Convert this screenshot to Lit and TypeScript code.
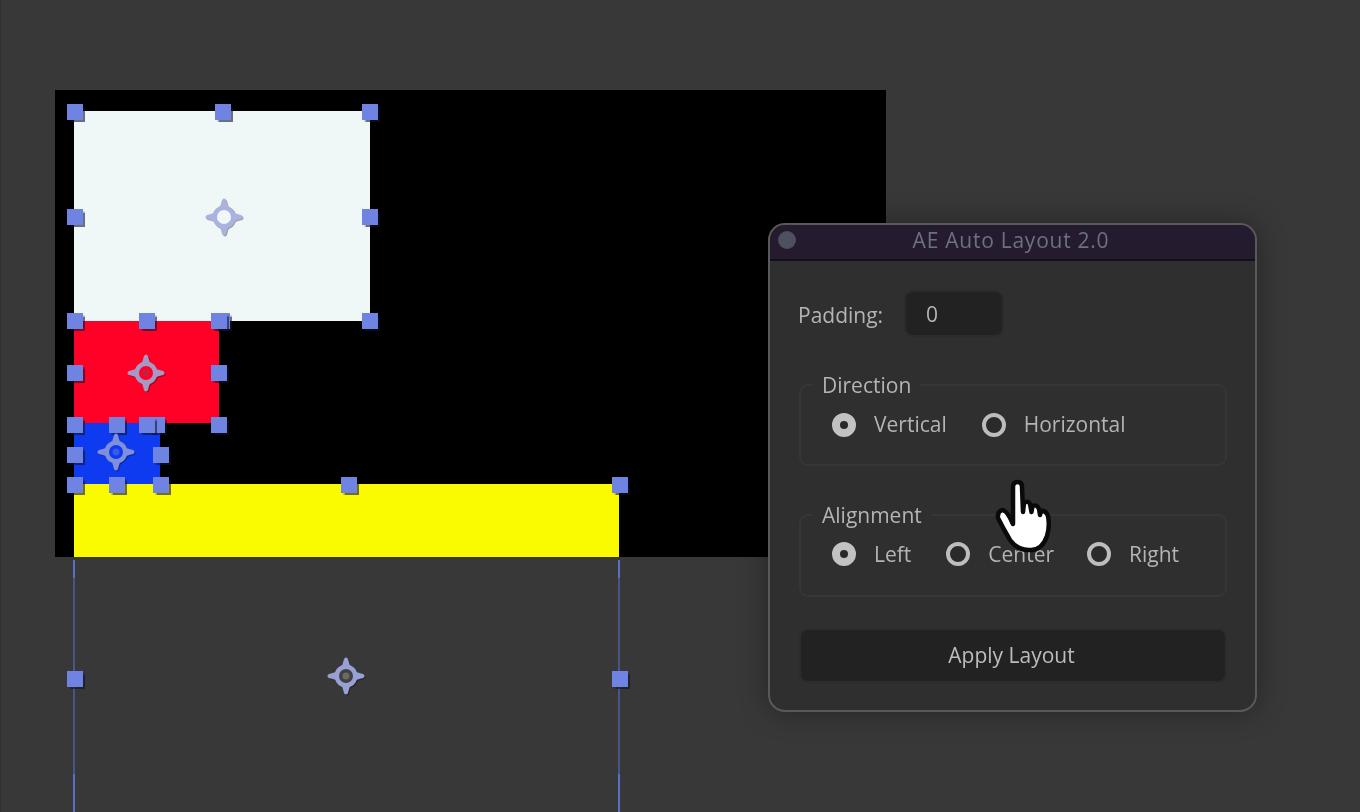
import { LitElement, html, css, svg } from "lit";
import { customElement } from "lit/decorators.js";

const SHAPES = [
  { x: 74, y: 111, w: 296, h: 210, c: "#f0f8f7" },
  { x: 74, y: 321, w: 145, h: 102, c: "#ff0027" },
  { x: 74, y: 423, w: 86, h: 61, c: "#0f3bf0" },
  { x: 74, y: 484, w: 545, h: 73, c: "#fbfb00" },
];
const HANDLES: [number, number][] = [
  [75, 112], [223, 112], [370, 112], [75, 217], [370, 217], [222, 321], [370, 321],
  [75, 321], [147, 321], [219, 321], [75, 373], [219, 373], [75, 425], [219, 425],
  [157, 425], [117, 425], [147, 425], [75, 455], [161, 455], [75, 485], [117, 485], [161, 485],
  [349, 485], [620, 485], [75, 679], [620, 679],
];
const ANCHORS: [number, number, string, string, string][] = [
  [224, 217, "#a9b2e0", "#f0f8f7", "#f0f8f7"],
  [146, 373, "#a59ac4", "#ff0027", "#c8203c"],
  [116, 452, "#7f8fdc", "#0f3bf0", "#3a5ae8"],
  [346, 676, "#98a0d4", "#404040", "#6a6a6a"],
];
const LINES = [74, 619];

function anchor(col: string, hole: string, core: string) {
  return svg`<svg class="anchor" viewBox="0 0 40 40">
    <path d="M20 1.5 Q22 1.5 22.5 5 L25 13 L15 13 L17.5 5 Q18 1.5 20 1.5Z M20 38.5 Q22 38.5 22.5 35 L25 27 L15 27 L17.5 35 Q18 38.5 20 38.5Z M1.5 20 Q1.5 18 5 17.5 L13 15 L13 25 L5 22.5 Q1.5 22 1.5 20Z M38.5 20 Q38.5 18 35 17.5 L27 15 L27 25 L35 22.5 Q38.5 22 38.5 20Z" fill="${col}"/>
    <circle cx="20" cy="20" r="11.5" fill="${col}"/>
    <circle cx="20" cy="20" r="7" fill="${hole}"/>
    <circle cx="20" cy="20" r="3.5" fill="${core}"/>
  </svg>`;
}

@customElement("app-root")
export class AppRoot extends LitElement {
  static styles = css`
    :host { display: block; width: 1360px; height: 812px; }
    .desk { position: relative; width: 1360px; height: 812px; background: #383838; overflow: hidden;
      box-shadow: inset 1px 0 0 #2f2f2f; font-family: "Open Sans", "Noto Sans", sans-serif; filter: blur(.45px); }
    .stage { position: absolute; left: 55px; top: 90px; width: 831px; height: 467px; background: #000; }
    .shape, .handle, .line, .anchor { position: absolute; }
    .handle { width: 16px; height: 16px; background: #6f84e2; box-shadow: 1.5px 1.5px 1px rgba(20,20,40,.6); }
    .line { width: 2px; top: 560px; height: 252px;
      background: linear-gradient(#5b6fc8 0 18px, #4a5488 18px 214px, #5b6fc8 214px); }
    .anchor { width: 40px; height: 40px; filter: drop-shadow(1px 1px 0.5px rgba(0,0,0,.35)); }
    .panel { position: absolute; left: 768px; top: 223px; width: 489px; height: 489px; box-sizing: border-box;
      display: flex; flex-direction: column; background: #2f2f2f; border: 2px solid #595959; border-radius: 17px;
      overflow: hidden; box-shadow: 0 0 28px rgba(0,0,0,.35); color: #b4b4b4; font-size: 21px; }
    .title { flex: none; height: 36px; box-sizing: border-box; padding: 0 3px 5px 0; display: flex; align-items: center; justify-content: center; position: relative;
      background: #241c2e; border-bottom: 2px solid #120f1c; color: #6d7081; font-size: 21px; letter-spacing: .75px; }
    .dot { position: absolute; left: 8px; top: 6px; width: 18px; height: 18px; border-radius: 50%; background: #4d505e; }
    .body { flex: 1; display: flex; flex-direction: column; padding: 29px 28px 0 29px; }
    .row { display: flex; align-items: center; gap: 21px; height: 47px; margin: 0 0 35px -1px; }
    .row-label { padding-top: 2px; }
    .input { width: 100px; height: 47px; box-sizing: border-box; display: flex; align-items: center; padding-left: 20px;
      background: #222; border: 2px solid #2b2b2b; border-radius: 9px; color: #b4b4b4; }
    fieldset { margin: 0 0 36px; padding: 0; height: 94px; box-sizing: border-box; border: 2px solid #363636;
      border-radius: 9px; min-width: 0; }
    fieldset.second { height: 95px; margin-bottom: 31px; }
    legend { padding: 0 9px; margin-left: 12px; line-height: 26px; height: 26px; }
    .opts { display: flex; align-items: center; gap: 35px; height: 26px; margin: 14px 0 0 31px; }
    .second .opts { margin-top: 13px; }
    .second .opt:last-child { margin-left: -2px; }
    .opt { display: flex; align-items: center; gap: 18px; line-height: 26px; white-space: nowrap; }
    .opt-text { margin-top: -2px; }
    .second .opt-text { margin-top: 0; }
    .radio { width: 24px; height: 24px; border-radius: 50%; box-sizing: border-box; border: 4px solid #bdbdbd; background: #2a2a2a; }
    .radio.on { border: 8px solid #c2c2c2; background: #2a2a2a; }
    .btn { height: 55px; box-sizing: border-box; display: flex; align-items: center; justify-content: center;
      padding: 0 3px 2px 0; background: #222; border: 2px solid #2c2c2c; border-radius: 9px; color: #bcbcbc; }
    .hand { position: absolute; left: 990px; top: 474px; }
  `;

  private radios(items: string[]) {
    return html`<div class="opts">${items.map((t, i) => html`
      <div class="opt"><span class="radio ${i === 0 ? "on" : ""}"></span><span class="opt-text">${t}</span></div>`)}</div>`;
  }

  render() {
    return html`<div class="desk">
      <div class="stage"></div>
      ${SHAPES.map(s => html`<div class="shape" style="left:${s.x}px;top:${s.y}px;width:${s.w}px;height:${s.h}px;background:${s.c}"></div>`)}
      ${LINES.map(x => html`<div class="line" style="left:${x - 1}px"></div>`)}
      ${HANDLES.map(([x, y]) => html`<div class="handle" style="left:${x - 8}px;top:${y - 8}px"></div>`)}
      ${ANCHORS.map(([x, y, c, h, k]) => html`<div style="position:absolute;left:${x - 20}px;top:${y - 20}px;width:40px;height:40px">${anchor(c, h, k)}</div>`)}
      <div class="panel">
        <div class="title"><span class="dot"></span>AE Auto Layout 2.0</div>
        <div class="body">
          <div class="row"><span class="row-label">Padding:</span><div class="input">0</div></div>
          <fieldset><legend>Direction</legend>${this.radios(["Vertical", "Horizontal"])}</fieldset>
          <fieldset class="second"><legend>Alignment</legend>${this.radios(["Left", "Center", "Right"])}</fieldset>
          <div class="btn">Apply Layout</div>
        </div>
      </div>
      <svg class="hand" width="70" height="84" viewBox="0 0 70 84">
        <path d="M23 13 Q23 8 27.5 8 Q32 8 32 13 L33 38 L34 29 Q38 26 40 30 L41.5 38 L42.5 32 Q47 30 49 35 L50 41 L51 37 Q56 36 58 42 Q60 52 57 62 Q52 76 41 76 Q28 77 20 66 Q13 54 8 44 Q7 38 12 36 Q17 36 23 50 Z"
          fill="#fff" stroke="#0a0a0a" stroke-width="4.5" stroke-linejoin="round"/>
      </svg>
    </div>`;
  }
}
